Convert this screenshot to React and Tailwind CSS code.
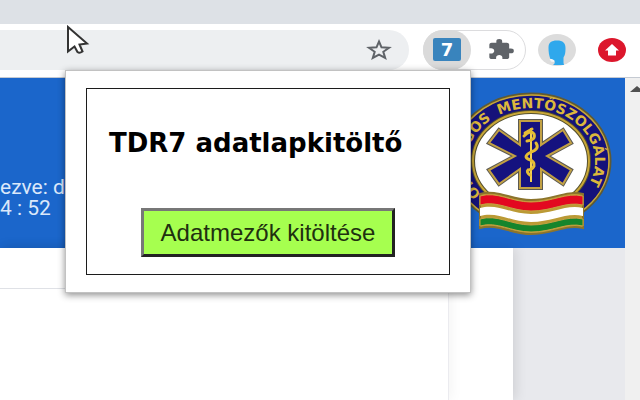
import React from 'react';
import { MdExtension } from 'react-icons/md';

const StarIcon = () => (
    <svg viewBox="0 0 28 24" className="h-6 w-7" aria-hidden="true">
        <path
            d="M14 3.500 L16.500 9.300 L24 9.800 L18.300 13.800 L20.200 20 L14 16.600 L7.800 20 L9.700 13.800 L4 9.800 L11.500 9.300 Z"
            fill="none"
            stroke="#5f6368"
            strokeWidth="2"
        />
    </svg>
);

const UserIcon = () => (
    <svg viewBox="0 0 38 32" className="h-8 w-[38px]" aria-hidden="true">
        <ellipse cx="19" cy="16" rx="19" ry="16" fill="#dcdcdc" />
        <path
            d="M10.500 14 C10.500 8.500 13 6.500 19 6.500 C25 6.500 27.500 9 27.500 14 C27.500 19 27 21 25.500 23.500 L25.500 28 C25.500 30 26 30.500 26 31 L15 31 C17 30 17 28 16.500 27 C14 27 12.500 26 12 24 C11 21 10.500 18 10.500 14 Z"
            fill="#2fa8ec"
        />
        <path d="M11.500 25 L14 25 L16.500 26.500 L16 28 L13 27.500 Z" fill="#f6f6f6" />
    </svg>
);

const UpdateIcon = () => (
    <svg viewBox="0 0 28 24" className="h-6 w-7" aria-hidden="true">
        <ellipse cx="14" cy="12" rx="14" ry="12" fill="#dc172c" />
        <path d="M14 6 L21 12.500 L18 12.500 L18 17.500 L10 17.500 L10 12.500 L7 12.500 Z" fill="#fff" />
    </svg>
);

const Pointer = () => (
    <svg viewBox="0 0 24 30" className="absolute left-[66px] top-[25px] h-[30px] w-6 z-20" aria-hidden="true">
        <path
            d="M2 2 L2 26.500 L8.500 21.500 L11.500 27 Q13.500 28.500 16.500 26.500 L13.500 19.500 L21 18.500 Z"
            fill="#fff"
            stroke="#333"
            strokeWidth="2"
        />
    </svg>
);

const ribbon = (top, bottom) =>
    `M31 ${top} C48 ${top - 5} 62 ${top + 6} 82 ${top + 6} C104 ${top + 6} 117 ${top - 4} 134 ${top} L134 ${bottom} C117 ${bottom - 4} 104 ${bottom + 6} 82 ${bottom + 6} C62 ${bottom + 6} 48 ${bottom - 5} 31 ${bottom} Z`;

const STAR = 'M71 30 H92 V54 L114 39 L122 52 L98 65 L122 79 L114 93 L92 78 V97 H71 V78 L50 93 L40 79 L66 65 L40 52 L50 39 L71 54 Z';

const Badge = () => (
    <svg viewBox="0 0 164 144" className="h-36 w-[164px] shrink-0" role="img" aria-label="Országos Mentőszolgálat">
        <defs>
            <path id="ring" d="M48 115 A64 53 0 1 1 116 115" />
        </defs>
        <ellipse cx="82" cy="70" rx="79" ry="67" fill="#15127a" stroke="#5f5a35" strokeWidth="3" />
        <ellipse cx="82" cy="70" rx="78" ry="66" fill="none" stroke="#c9a737" strokeWidth="1.500" />
        <ellipse cx="82" cy="70" rx="58" ry="49" fill="#fff" stroke="#55502f" strokeWidth="4" />
        <ellipse cx="82" cy="70" rx="58" ry="49" fill="none" stroke="#c9a737" strokeWidth="2" />
        <g fill="#dcb83c" fontFamily="'DejaVu Sans', sans-serif" fontWeight="700" fontSize="14">
            <text>
                <textPath href="#ring" startOffset="39%">MENTŐSZOLGÁLAT</textPath>
            </text>
            <text textAnchor="end">
                <textPath href="#ring" startOffset="36%">ORSZÁGOS</textPath>
            </text>
        </g>
        <path d={STAR} fill="#15127f" stroke="#5c5a52" strokeWidth="4" />
        <path d={STAR} fill="#15127f" stroke="#c2a144" strokeWidth="2" />
        <path d="M82 37 V91" stroke="#f1d052" strokeWidth="2" />
        <path
            d="M76 42 L83 38 M75 45 Q82 38 85 43 Q87 49 78 50 M87 52 Q91 58 82 61 Q74 65 79 68 Q86 70 85 75 Q83 79 79 79 Q77 81 81 84"
            fill="none"
            stroke="#e5bd35"
            strokeWidth="3"
            strokeLinecap="round"
        />
        <path d={ribbon(103, 137)} fill="#bb9a35" stroke="#8b742c" strokeWidth="2" />
        <path d={ribbon(105, 114)} fill="#e30820" stroke="#c7a241" strokeWidth="1" />
        <path d={ribbon(117, 125)} fill="#fff" />
        <path d={ribbon(128, 135)} fill="#15852c" stroke="#c7a241" strokeWidth="1" />
    </svg>
);

const Toolbar = () => (
    <div className="flex h-[53px] items-center bg-white pr-3.5 pb-0.5">
        <div className="mr-3.5 flex h-10 flex-1 items-center justify-end rounded-r-full bg-[#edeff1] pr-4">
            <button aria-label="Bookmark">
                <StarIcon />
            </button>
        </div>
        <div className="mr-3 flex h-10 w-[103px] items-center rounded-full border border-[#dcdcde]">
            <button className="-ml-px flex h-10 w-12 items-center justify-center rounded-full bg-[#dadada]">
                <span className="flex h-[23px] w-7 items-center justify-center rounded-xs bg-[#3984bd] font-['DejaVu_Sans',sans-serif] text-lg font-bold text-white">
                    7
                </span>
            </button>
            <button aria-label="Extensions" className="ml-4">
                <MdExtension preserveAspectRatio="none" className="h-[23px] w-7 text-[#5f6368]" />
            </button>
        </div>
        <button aria-label="Profile" className="mr-[22px]">
            <UserIcon />
        </button>
        <button aria-label="Update">
            <UpdateIcon />
        </button>
    </div>
);

const Popup = () => (
    <div className="absolute left-[65px] top-[70px] z-10 w-[406px] border border-[#c2c2c2] bg-white px-5 py-[17px] shadow-[0_2px_7px_rgba(0,0,0,0.45)]">
        <div className="flex flex-col items-center border border-[#1c1c1c] px-[22px] pt-[38px] pb-[17px]">
            <h1 className="self-start whitespace-nowrap font-['DejaVu_Sans',sans-serif] text-[26px] leading-8 font-bold text-black">
                TDR7 adatlapkitöltő
            </h1>
            <button className="mt-[49px] h-[49px] w-[254px] whitespace-nowrap border-3 border-t-[#777] border-l-[#777] border-r-[#222] border-b-[#222] bg-[#a6ff4f] font-['Liberation_Sans',sans-serif] text-2xl leading-10 text-[#20300f]">
                Adatmezők kitöltése
            </button>
        </div>
    </div>
);

const App = () => (
    <div className="relative flex min-h-screen flex-col overflow-hidden bg-white">
        <div className="h-6 bg-[#dde1e6]" />
        <Toolbar />
        <div className="flex flex-1 border-t border-[#c5cad2]">
            <div className="flex min-w-0 flex-1 flex-col">
                <header className="flex h-[170px] items-center justify-between bg-[#1b66cb] pr-3">
                    <p className="mt-[70px] whitespace-nowrap font-[Roboto,sans-serif] text-[21px] leading-[21px] text-[#dbe8fa]">
                        ezve: d
                        <br />4 : 52
                    </p>
                    <Badge />
                </header>
                <main className="flex flex-1 bg-[#e8e9ed]">
                    <div className="flex flex-1 bg-white shadow-[2px_0_12px_rgba(0,0,0,0.12)]">
                        <div className="flex-1 border-r border-[#ebebef] bg-white shadow-[2px_0_12px_rgba(0,0,0,0.05)]">
                            <div className="h-[41px] border-b border-[#dfe1e6]" />
                        </div>
                        <div className="w-16" />
                    </div>
                    <div className="w-28" />
                </main>
            </div>
            <div className="flex w-[15px] justify-end overflow-hidden bg-[#f0f0f0] pt-2">
                <svg viewBox="0 0 10 6" className="h-1.5 w-2.5" aria-hidden="true">
                    <path d="M0 6 L7 0 L14 6 Z" fill="#505050" />
                </svg>
            </div>
        </div>
        <Popup />
        <Pointer />
    </div>
);

export default App;
